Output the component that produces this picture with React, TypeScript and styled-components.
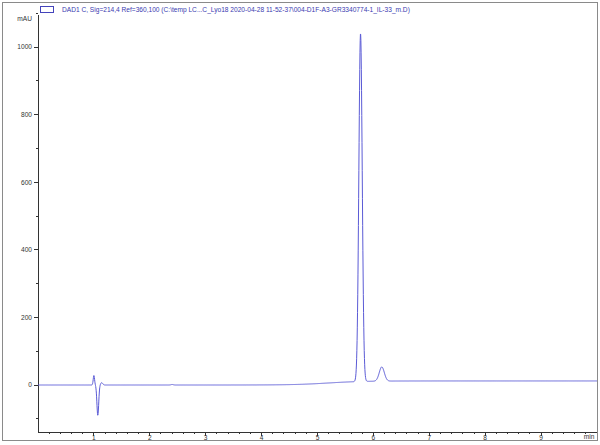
import React from 'react'
import styled, { createGlobalStyle } from 'styled-components'

const GlobalStyle = createGlobalStyle`
  html, body { margin: 0; padding: 0; background: #fff; }
  body { font-family: 'Liberation Sans', Arial, sans-serif; }
`

const Frame = styled.div`
  position: relative;
  margin: 2px 0 0 2px;
  width: 594px;
  height: 437px;
  border: 1px solid #8a8a8a;
  display: flex;
  flex-direction: column;
`

const Legend = styled.div`
  display: flex;
  align-items: center;
  gap: 8px;
  height: 12px;
  padding-left: 37px;
`

const LegendSwatch = styled.span`
  width: 12px;
  height: 5px;
  border: 1px solid #4444bb;
`

const LegendText = styled.span`
  font-size: 6.6px;
  color: #3a3ab0;
  white-space: nowrap;
`

const Chart = styled.svg`
  display: block;
  overflow: visible;
`

// page coords -> svg coords (svg starts at x=3, y=15)
const OX = 3
const OY = 15
const X0 = 38
const PX_PER_MIN = 55.9
const Y0 = 385
const PX_PER_MAU = 67.6 / 200

const xOf = (t: number) => X0 + t * PX_PER_MIN - OX
const yOf = (v: number) => Y0 - v * PX_PER_MAU - OY

const g = (t: number, c: number, s: number) => Math.exp(-((t - c) ** 2) / (2 * s * s))

const signal = (t: number) => {
  const base = 12 / (1 + Math.exp(-(t - 5.2) * 3.2))
  return (
    base +
    1030 * g(t, 5.77, 0.03) +
    42 * g(t, 6.15, 0.045) +
    28 * g(t, 1.0, 0.012) -
    90 * g(t, 1.07, 0.016) +
    7 * g(t, 1.14, 0.018) +
    1.5 * g(t, 2.4, 0.02)
  )
}

const buildPath = () => {
  const pts: string[] = []
  for (let t = 0; t <= 10.0; t += 0.004) {
    pts.push(`${xOf(t).toFixed(2)},${yOf(signal(t)).toFixed(2)}`)
  }
  return 'M' + pts.join('L')
}

const TickLabel = styled.text`
  font-size: 6.6px;
  fill: #333;
`

const App = () => {
  const axisX = X0 - OX
  const axisBottom = 432 - OY
  const axisTop = 12 - OY + 3
  const yMajor = [0, 200, 400, 600, 800, 1000]
  const yMinor = [-100, 100, 300, 500, 700, 900, 1100]
  const xMinor: number[] = []
  for (let i = 1; i < 50; i++) if (i % 5 !== 0) xMinor.push(i * 0.2)

  return (
    <>
      <GlobalStyle />
      <Frame>
        <Legend>
          <LegendSwatch />
          <LegendText>
            DAD1 C, Sig=214,4 Ref=360,100 (C:\temp LC...C_Lyo18 2020-04-28 11-52-37\004-D1F-A3-GR3340774-1_IL-33_m.D)
          </LegendText>
        </Legend>
        <Chart width={594} height={425} viewBox="0 0 594 425">
          <g stroke="#333" strokeWidth={1} shapeRendering="crispEdges">
            <line x1={axisX} y1={axisTop} x2={axisX} y2={axisBottom} />
            <line x1={axisX} y1={axisBottom} x2={594} y2={axisBottom} />
            {yMajor.map((v) => (
              <line key={v} x1={axisX - 4} y1={yOf(v)} x2={axisX} y2={yOf(v)} />
            ))}
            {yMinor.map((v) => (
              <line key={v} x1={axisX - 2} y1={yOf(v)} x2={axisX} y2={yOf(v)} />
            ))}
            {[1, 2, 3, 4, 5, 6, 7, 8, 9].map((m) => (
              <line key={m} x1={xOf(m)} y1={axisBottom} x2={xOf(m)} y2={axisBottom + 4} />
            ))}
            {xMinor.map((m) => (
              <line key={m} x1={xOf(m)} y1={axisBottom} x2={xOf(m)} y2={axisBottom + 2} />
            ))}
          </g>
          {yMajor.map((v) => (
            <TickLabel key={v} x={axisX - 6} y={yOf(v) + 2.3} textAnchor="end">
              {v}
            </TickLabel>
          ))}
          <TickLabel x={axisX - 6} y={19 - OY + 2.3} textAnchor="end">
            mAU
          </TickLabel>
          {[1, 2, 3, 4, 5, 6, 7, 8, 9].map((m) => (
            <TickLabel key={m} x={xOf(m)} y={axisBottom + 7.5} textAnchor="middle">
              {m}
            </TickLabel>
          ))}
          <TickLabel x={589 - OX} y={axisBottom + 7} textAnchor="middle">
            min
          </TickLabel>
          <path d={buildPath()} fill="none" stroke="#5b5bd6" strokeWidth={1} strokeLinejoin="round" />
        </Chart>
      </Frame>
    </>
  )
}

export default App
